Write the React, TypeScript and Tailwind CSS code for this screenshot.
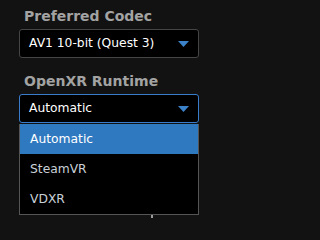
import React from "react"

function Caret() {
  return (
    <svg width="11" height="6" viewBox="0 0 11 6" className="shrink-0">
      <path d="M0 0 H11 L5.5 6 Z" fill="#3b82c9" />
    </svg>
  )
}

function SelectBox({ value, focused }: { value: string; focused?: boolean }) {
  return (
    <div
      className={
        focused
          ? "flex h-[29px] items-center justify-between rounded-[3px] border border-[#3a7ccc] bg-black pl-[9px] pr-[9px] text-[12.3px] text-white"
          : "flex h-[29px] items-center justify-between rounded-[3px] border border-[#454545] bg-black pl-[9px] pr-[9px] text-[12.3px] text-white"
      }
    >
      <span>{value}</span>
      <Caret />
    </div>
  )
}

export default function App() {
  const options = ["Automatic", "SteamVR", "VDXR"]

  return (
    <div
      className="min-h-screen w-full overflow-hidden bg-[#121212] pl-[19px] pt-[6px]"
      style={{ fontFamily: '"DejaVu Sans", sans-serif' }}
    >
      <div className="w-[180px]">
        <div className="pl-[5px] text-[14px] font-bold leading-[20px] text-[#a3a3a3]">Preferred Codec</div>
        <div className="mt-[3px]">
          <SelectBox value="AV1 10-bit (Quest 3)" />
        </div>

        <div className="mt-[13px] pl-[5px] text-[14px] font-bold leading-[20px] text-[#a3a3a3]">OpenXR Runtime</div>
        <div className="mt-[3px]">
          <SelectBox value="Automatic" focused />
        </div>

        <div className="mt-px border border-t-0 border-[#555555] bg-black">
          {options.map((o, i) => (
            <div
              key={o}
              className={
                i === 0
                  ? "flex h-[30px] items-center bg-[#2f79c0] pl-[10px] text-[12.3px] text-white"
                  : "flex h-[30px] items-center pl-[10px] text-[12.3px] text-[#c9d0d8]"
              }
            >
              {o}
            </div>
          ))}
        </div>
        <div className="ml-[132px] h-[3px] w-[2px] bg-[#9a9a9a]" />
      </div>
    </div>
  )
}
